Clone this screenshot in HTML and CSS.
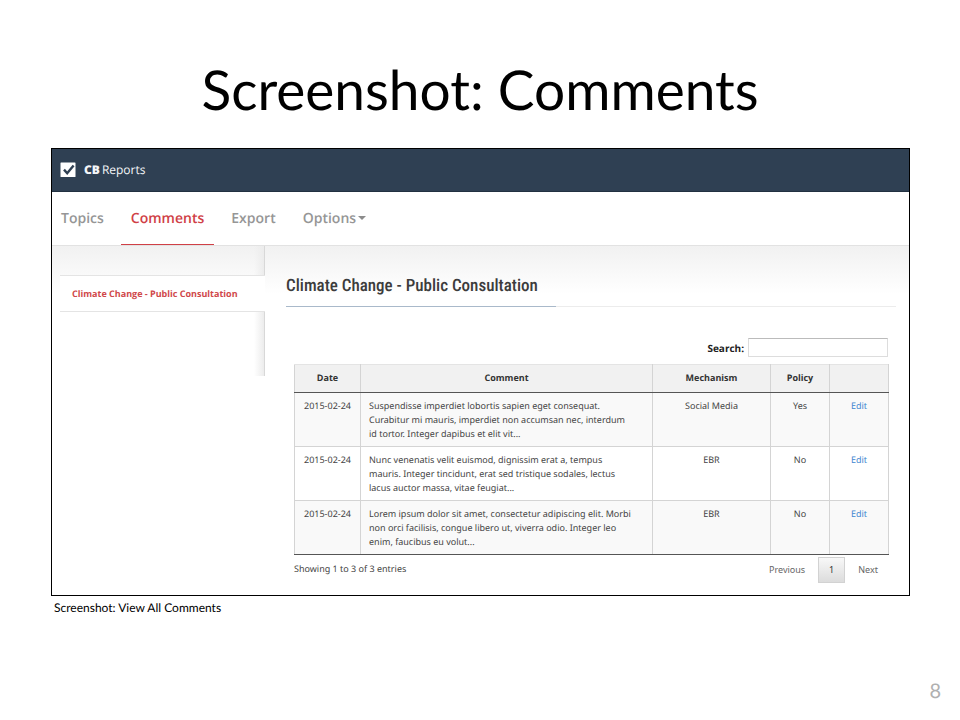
FILE: index.html
```html
<!DOCTYPE html>
<html lang="en">
<head>
<meta charset="utf-8">
<meta name="viewport" content="width=device-width, initial-scale=1">
<title>Screenshot: Comments</title>
<link rel="stylesheet" href="styles.css">
</head>
<body>
<main class="slide">
  <h1 class="slide-title">Screenshot: Comments</h1>
  <figure class="figure">
    <div class="app">
      <header class="app-header">
        <svg class="logo" viewBox="0 0 16 16" aria-hidden="true">
          <rect x="0.5" y="0.5" width="15" height="14.5" rx="0.6" fill="#fff"/>
          <path d="M4 7.6 7.2 11.2 13.6 3.4" fill="none" stroke="#2f4053" stroke-width="2.4"/>
        </svg>
        <span class="brand"><b class="brand-bold">CB</b>Reports</span>
      </header>
      <nav class="nav">
        <a class="nav-link" href="#">Topics</a>
        <a class="nav-link active" href="#">Comments</a>
        <a class="nav-link" href="#">Export</a>
        <a class="nav-link" href="#">Options<span class="caret"></span></a>
      </nav>
      <div class="app-body">
        <aside class="sidebar">
          <div class="side-space"></div>
          <a class="side-link" href="#">Climate Change - Public Consultation</a>
          <div class="side-space side-rest"></div>
        </aside>
        <section class="content">
          <div class="heading"><h2 class="heading-text">Climate Change - Public Consultation</h2></div>
          <div class="panel">
            <div class="search">
              <label for="search">Search:</label>
              <input class="search-input" id="search" type="text">
            </div>
            <table class="table">
              <colgroup><col class="col-date"><col class="col-comment"><col class="col-mech"><col class="col-small"><col class="col-small"></colgroup>
              <thead>
                <tr><th>Date</th><th>Comment</th><th>Mechanism</th><th>Policy</th><th></th></tr>
              </thead>
              <tbody>
                <tr><td>2015-02-24</td><td class="comment">Suspendisse imperdiet lobortis sapien eget consequat.<br>Curabitur mi mauris, imperdiet non accumsan nec, interdum<br>id tortor. Integer dapibus et elit vit...</td><td>Social Media</td><td>Yes</td><td><a class="edit" href="#">Edit</a></td></tr>
                <tr><td>2015-02-24</td><td class="comment">Nunc venenatis velit euismod, dignissim erat a, tempus<br>mauris. Integer tincidunt, erat sed tristique sodales, lectus<br>lacus auctor massa, vitae feugiat...</td><td>EBR</td><td>No</td><td><a class="edit" href="#">Edit</a></td></tr>
                <tr><td>2015-02-24</td><td class="comment">Lorem ipsum dolor sit amet, consectetur adipiscing elit. Morbi<br>non orci facilisis, congue libero ut, viverra odio. Integer leo<br>enim, faucibus eu volut...</td><td>EBR</td><td>No</td><td><a class="edit" href="#">Edit</a></td></tr>
              </tbody>
            </table>
            <div class="table-footer">
              <span>Showing 1 to 3 of 3 entries</span>
              <div class="pager">
                <button class="page" type="button">Previous</button>
                <button class="page current" type="button">1</button>
                <button class="page" type="button">Next</button>
              </div>
            </div>
          </div>
        </section>
      </div>
    </div>
    <figcaption class="caption">Screenshot: View All Comments</figcaption>
  </figure>
  <footer class="slide-number">8</footer>
</main>
</body>
</html>
```
FILE: styles.css
```css
* { box-sizing: border-box; }

body {
  margin: 0;
  background: #fff;
  color: #000;
  font-family: "Open Sans", "Noto Sans", sans-serif;
  text-rendering: geometricPrecision;
}

a { text-decoration: none; }

.slide {
  display: flex;
  flex-direction: column;
  min-height: 100vh;
}

.slide-title {
  margin: 0;
  padding-top: 55px;
  height: 148px;
  font: 400 55px/68px Lato, sans-serif;
  text-align: center;
}

.figure { margin: 0 50px 0 51px; }

.app {
  border: 1px solid #000;
  background: #fff;
}

.app-header {
  display: flex;
  align-items: center;
  gap: 8px;
  height: 43px;
  padding-left: 8px;
  background: #2f4053;
  border-bottom: 1px solid #223141;
}

.logo { width: 16px; height: 16px; }

.brand {
  color: #f4f6f8;
  font-size: 12px;
  line-height: 16px;
}

.brand-bold { font-weight: 800; margin-right: 2px; }

.nav {
  display: flex;
  gap: 7px;
  height: 53px;
}

.nav-link {
  padding: 0 10px;
  border-bottom: 1px solid transparent;
  color: #969696;
  font-size: 14px;
  font-weight: 600;
  line-height: 54px;
}

.nav-link:first-child { padding-left: 9px; }

.active { color: #d04046; border-color: #d04046; }

.caret {
  display: inline-block;
  margin-left: 2px;
  border: 4px solid transparent;
  border-top-color: #8c8c8c;
  border-bottom: 0;
  vertical-align: 3px;
}

.app-body {
  display: grid;
  grid-template-columns: 205px 1fr;
  column-gap: 21px;
  min-height: 350px;
  padding: 0 13px 12px 8px;
  border-top: 1px solid #e2e2e2;
  background: linear-gradient(#f1f1f1, #fff 48px);
}

.sidebar { display: flex; flex-direction: column; }

.side-space {
  height: 29px;
  border-right: 1px solid #d8d8d8;
  background: linear-gradient(to left, #ececec, transparent 10px);
}

.side-rest { height: 64px; }

.side-link {
  height: 37px;
  padding-left: 12px;
  border: solid #e4e4e4;
  border-width: 1px 0;
  background: #fff;
  color: #d0484a;
  font-size: 9px;
  font-weight: 700;
  line-height: 36px;
}

.heading {
  margin-top: 26px;
  border-bottom: 1px solid #ececec;
}

.heading-text {
  display: inline-block;
  margin: 0 0 -1px;
  padding: 0 18px 6px 0;
  border-bottom: 1px solid #a9b9ca;
  color: #3c3c3c;
  font: 500 17px/28px "Roboto Condensed", "Liberation Sans Narrow", sans-serif;
  vertical-align: top;
}

.panel {
  padding: 31px 7px 0 8px;
  color: #444;
  font-family: "Noto Sans", "Open Sans", sans-serif;
  font-size: 9px;
  line-height: 14px;
}

.search {
  display: flex;
  justify-content: flex-end;
  align-items: center;
  gap: 4px;
  margin-bottom: 7px;
  padding-right: 1px;
  color: #222;
  font: 700 10px/14px "Open Sans", "Noto Sans", sans-serif;
}

.search-input {
  width: 140px;
  height: 19px;
  border: 1px solid #ddd;
  border-top-color: #bbb;
  background: #fff;
  font: inherit;
}

.table {
  width: 100%;
  table-layout: fixed;
  border-collapse: collapse;
  border-bottom: 1px solid #555;
}

.col-date { width: 66px; }
.col-mech { width: 118px; }
.col-small { width: 59px; }

.table th {
  height: 28px;
  padding: 0 0 2px;
  border: 1px solid #d4d4d4;
  border-top-color: #e4e4e4;
  border-bottom: 1px solid #555;
  background: #f1f1f1;
  color: #333;
  font-family: "Open Sans", "Noto Sans", sans-serif;
  font-weight: 700;
}

.table td {
  padding: 6px 0 5px;
  border: 1px solid #d4d4d4;
  text-align: center;
  vertical-align: top;
}

.table tbody tr:nth-child(odd) { background: #f9f9f9; }
.table tbody tr:last-child td { border-bottom-color: #555; }
.table .comment { padding-left: 8px; text-align: left; white-space: nowrap; }

.edit { color: #3f86d0; }

.table-footer {
  display: flex;
  justify-content: space-between;
  padding-top: 2px;
  line-height: 24px;
}

.pager { display: flex; gap: 2px; }

.page {
  min-width: 26px;
  height: 26px;
  padding: 0 10px;
  border: 1px solid transparent;
  background: none;
  color: #666;
  font: inherit;
}

.current {
  border-color: #d2d2d2;
  background: linear-gradient(#f8f8f8, #dcdcdc);
  color: #333;
}

.caption {
  margin: 4px 0 0 3px;
  font: 400 12px/15px Lato, sans-serif;
}

.slide-number {
  margin-top: auto;
  padding: 0 19px 16px 0;
  color: #b0b0b0;
  font: 400 20px/26px Lato, sans-serif;
  text-align: right;
}
```
